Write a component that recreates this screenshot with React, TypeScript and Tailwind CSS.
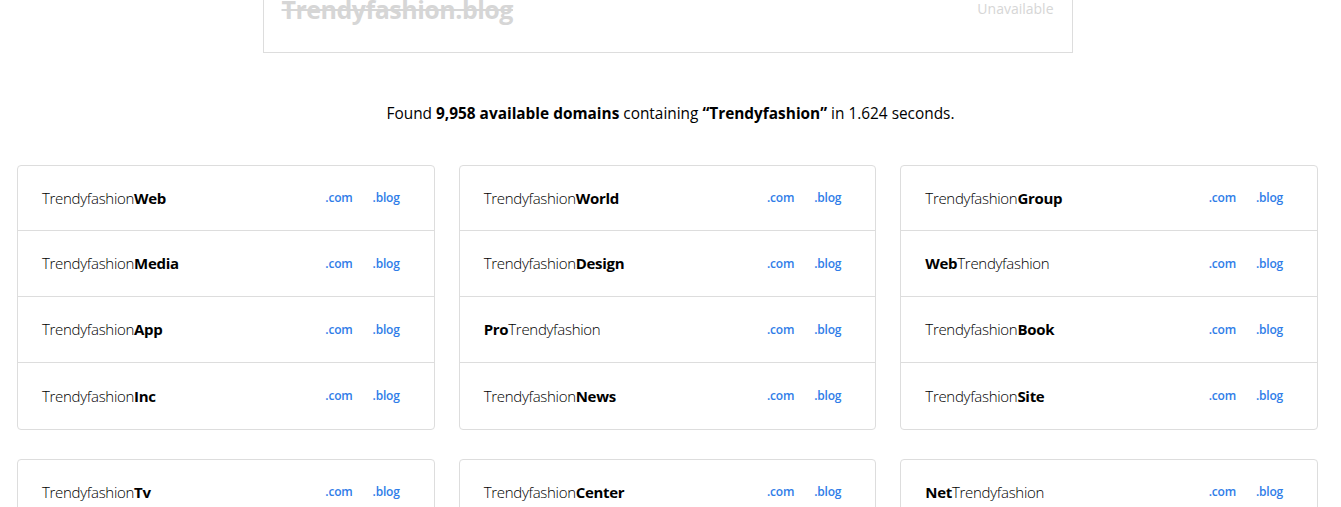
import React from 'react';

type Name = { pre: string; bold: string; post: string };

const groups: Name[][] = [
  [
    { pre: 'Trendyfashion', bold: 'Web', post: '' },
    { pre: 'Trendyfashion', bold: 'Media', post: '' },
    { pre: 'Trendyfashion', bold: 'App', post: '' },
    { pre: 'Trendyfashion', bold: 'Inc', post: '' },
  ],
  [
    { pre: 'Trendyfashion', bold: 'World', post: '' },
    { pre: 'Trendyfashion', bold: 'Design', post: '' },
    { pre: '', bold: 'Pro', post: 'Trendyfashion' },
    { pre: 'Trendyfashion', bold: 'News', post: '' },
  ],
  [
    { pre: 'Trendyfashion', bold: 'Group', post: '' },
    { pre: '', bold: 'Web', post: 'Trendyfashion' },
    { pre: 'Trendyfashion', bold: 'Book', post: '' },
    { pre: 'Trendyfashion', bold: 'Site', post: '' },
  ],
  [
    { pre: 'Trendyfashion', bold: 'Tv', post: '' },
    { pre: 'Trendyfashion', bold: 'Shop', post: '' },
    { pre: 'Trendyfashion', bold: 'Hub', post: '' },
    { pre: 'Trendyfashion', bold: 'Life', post: '' },
  ],
  [
    { pre: 'Trendyfashion', bold: 'Center', post: '' },
    { pre: 'Trendyfashion', bold: 'Blog', post: '' },
    { pre: 'Trendyfashion', bold: 'Net', post: '' },
    { pre: 'Trendyfashion', bold: 'Store', post: '' },
  ],
  [
    { pre: '', bold: 'Net', post: 'Trendyfashion' },
    { pre: 'Trendyfashion', bold: 'Online', post: '' },
    { pre: 'Trendyfashion', bold: 'Zone', post: '' },
    { pre: 'Trendyfashion', bold: 'Pro', post: '' },
  ],
];

const DomainRow: React.FC<{ name: Name }> = ({ name }) => (
  <div className="flex items-center justify-between h-[66px] first:h-[65px] pl-[24px] pr-[34px]">
    <span className="text-[15px] tracking-[-0.3px] text-black">
      <span className="font-light">{name.pre}</span>
      <span className="font-bold">{name.bold}</span>
      <span className="font-light">{name.post}</span>
    </span>
    <div className="flex items-center gap-[20px] text-[12px] font-semibold text-[#2f7de8] tracking-[-0.2px]">
      <a href="#">.com</a>
      <a href="#">.blog</a>
    </div>
  </div>
);

export default function App() {
  return (
    <div className="min-h-screen bg-white overflow-hidden" style={{ fontFamily: '"Open Sans", "Noto Sans", sans-serif' }}>
      {/* Unavailable exact match */}
      <div className="mx-auto -mt-[40px] w-[810px] -translate-x-[3px] border border-[#dddddd] px-[18px] pt-[32px] pb-[27px] flex justify-between items-start">
        <span className="text-[25px] leading-[32px] font-bold text-[#d6d6d6] line-through tracking-[-0.5px]">
          Trendyfashion.blog
        </span>
        <span className="text-[14px] leading-[32px] text-[#d6d6d6]">Unavailable</span>
      </div>

      <p className="mt-[49px] mb-[39px] text-center text-[15.4px] leading-[24px] text-black">
        Found <b>9,958 available domains</b> containing <b>“Trendyfashion”</b> in 1.624 seconds.
      </p>

      <div className="grid grid-cols-3 gap-x-[24px] gap-y-[29px] pl-[17px] pr-[23px]">
        {groups.map((g, i) => (
          <div key={i} className="rounded-[4px] border border-[#dddddd] divide-y divide-[#dddddd]">
            {g.map((n, j) => (
              <DomainRow key={j} name={n} />
            ))}
          </div>
        ))}
      </div>
    </div>
  );
}
